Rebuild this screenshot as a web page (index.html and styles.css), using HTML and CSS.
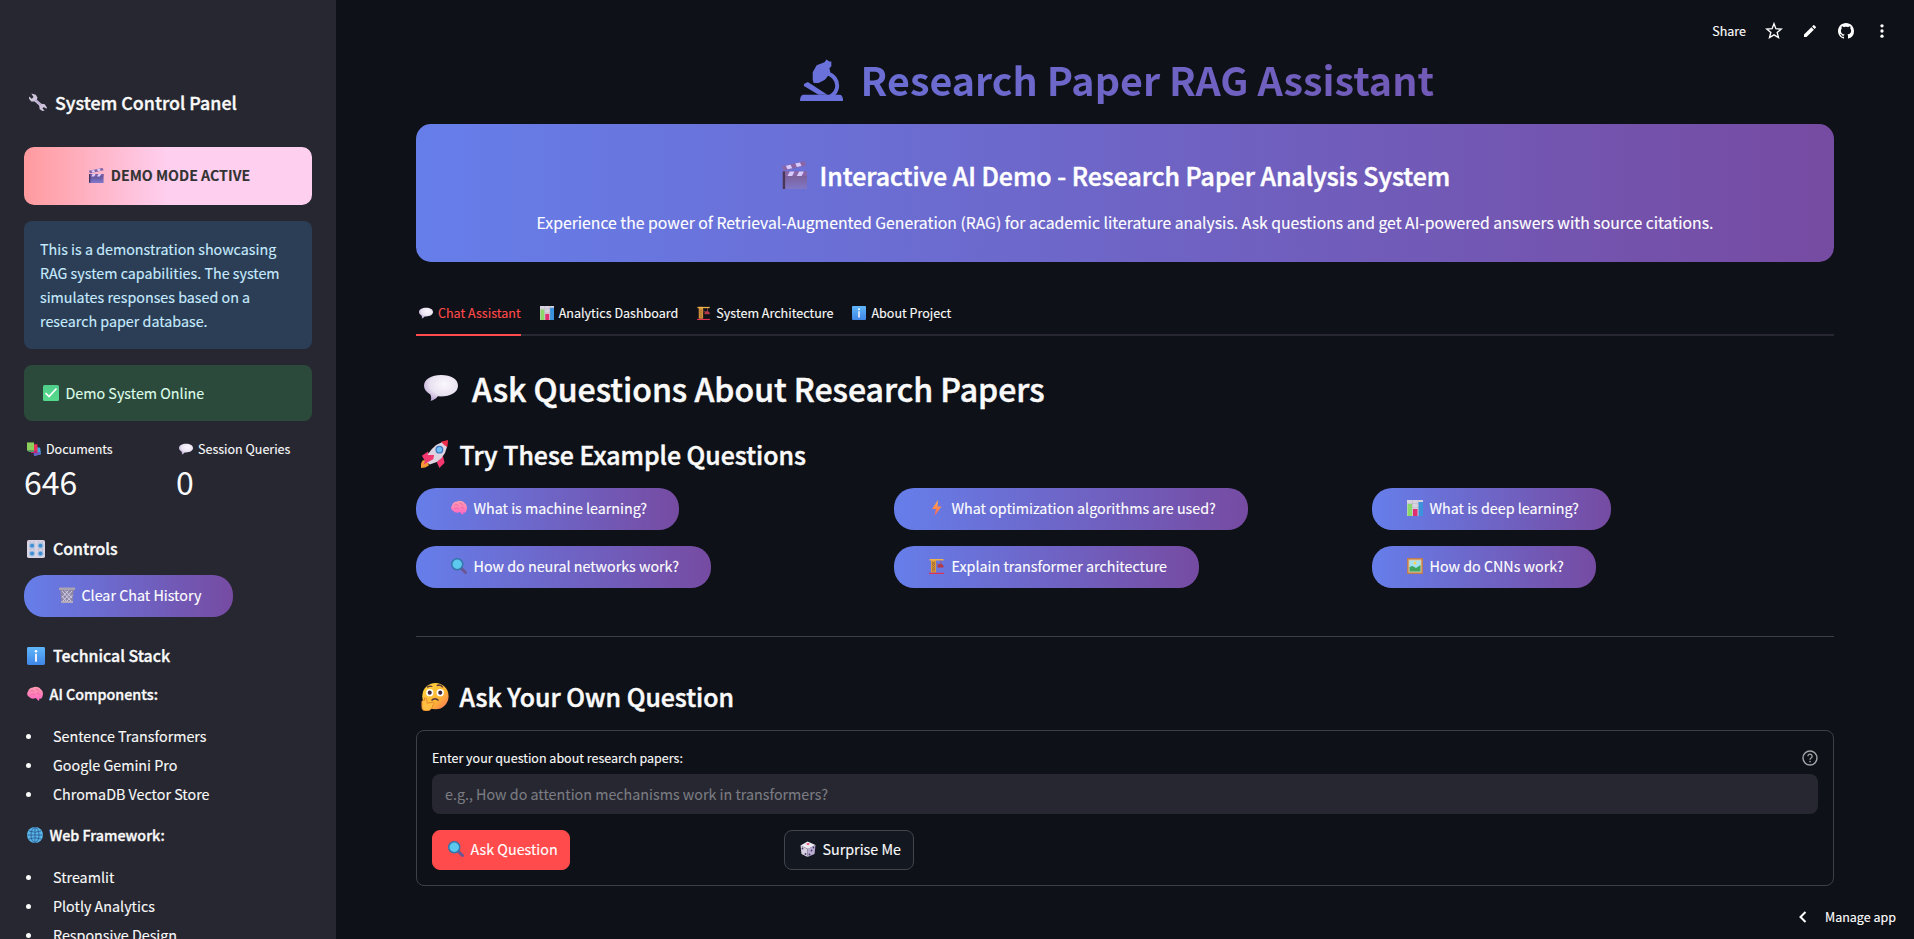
FILE: index.html
```
<!DOCTYPE html>
<html lang="en">
<head>
<meta charset="utf-8">
<title>Research Paper RAG Assistant</title>
<link rel="stylesheet" href="styles.css">
</head>
<body>
<svg class="defs" aria-hidden="true">
  <defs>
    <linearGradient id="g-clap" x1="0" y1="0" x2="0" y2="1"><stop offset="0" stop-color="#7a5a8e"/><stop offset="1" stop-color="#8077c6"/></linearGradient>
    <linearGradient id="g-clap2" x1="0" y1="0" x2="0" y2="1"><stop offset="0" stop-color="#594a86"/><stop offset="1" stop-color="#8178d0"/></linearGradient>
    <radialGradient id="g-talk" cx=".6" cy=".35" r=".7"><stop offset="0" stop-color="#fbf8fd"/><stop offset=".6" stop-color="#e9e2f1"/><stop offset="1" stop-color="#bba7d3"/></radialGradient>
    <linearGradient id="g-info" x1="0" y1="0" x2="0" y2="1"><stop offset="0" stop-color="#5fb6fb"/><stop offset="1" stop-color="#3f86e6"/></linearGradient>
    <linearGradient id="g-bolt" x1="0" y1="0" x2="0" y2="1"><stop offset="0" stop-color="#ffb54a"/><stop offset="1" stop-color="#ff5a55"/></linearGradient>
    <linearGradient id="g-face" x1="0" y1="0" x2="1" y2="1"><stop offset="0" stop-color="#ffd93f"/><stop offset=".6" stop-color="#ffb534"/><stop offset="1" stop-color="#f5705c"/></linearGradient>
    <linearGradient id="g-brain" x1="0" y1="0" x2="0" y2="1"><stop offset="0" stop-color="#ff9fb0"/><stop offset="1" stop-color="#ff63c3"/></linearGradient>
    <linearGradient id="g-check" x1="0" y1="0" x2="0" y2="1"><stop offset="0" stop-color="#4fce8a"/><stop offset="1" stop-color="#55d98b"/></linearGradient>
  </defs>
  <symbol id="scope" viewBox="0 0 44 44">
    <g fill="#6b71da"><path d="M27 1 30 3 32 3 32 8 30 10 31 14 27 20 25 22 19 25 14 25 13 22 13 14 17 7 25 4Z"/><path d="M4 26 8 24 28 37H19L4 28Z"/><path d="M3 37H41Q44 38 44 43.500H0Q0 38 3 37Z"/></g>
    <path d="M28 15Q38 19 38 28Q38 34 31 39" fill="none" stroke="#6b71da" stroke-width="4"/>
  </symbol>
  <symbol id="wrench" viewBox="0 0 32 32"><path d="M4 1 12 3 15 8 14 12 22 19 28 20 32 26 31 28 26 25 24 28 28 31 24 32 19 29 18 22 10 15 4 15 0 10 0 6 5 10 8 7Z" fill="#cfc6db"/><path d="m11 12 11 10" stroke="#b8a4d6" stroke-width="2"/></symbol>
  <symbol id="clapper" viewBox="0 0 32 32"><path d="M0 13H31V32H2L0 31Z" fill="url(#g-clap2)"/><path d="M0 13H3V32L0 31Z" fill="#43335f"/><path d="M0 6 29 0 31 5 2 11Z" fill="#7d5fa6"/><path d="m5 5.500 6-1.200 2 4-6 1.200Zm12-2.700 6-1.200 2 4-6 1.200Z" fill="#d9ccff"/><path d="M3 13H31V18H3Z" fill="#7d5fa6"/><path d="m8 13h6l-3 5H5Zm12 0h6l-3 5h-6Z" fill="#d9ccff"/></symbol>
  <symbol id="clapper-lg" viewBox="0 0 32 32" preserveAspectRatio="none"><path d="M1 12H32V32H1Z" fill="url(#g-clap)"/><path d="M1 12H4V32H1Z" fill="#4a3555"/><path d="M0 6 29 0 31 5 2 11Z" fill="#8a66a8"/><path d="m5 5.500 6-1.200 2 4-6 1.200Zm12-2.700 6-1.200 2 4-6 1.200Z" fill="#d6ccff"/><path d="M4 12H32V17H4Z" fill="#8a66a8"/><path d="m10 12h6l-3 5H7Zm12 0h6l-3 5h-6Z" fill="#d6ccff"/></symbol>
  <symbol id="check" viewBox="0 0 32 32"><rect width="32" height="32" rx="3" fill="url(#g-check)"/><path d="m6 17 6 6L26 8" fill="none" stroke="#fff" stroke-width="3.400" stroke-linecap="round"/></symbol>
  <symbol id="books" viewBox="0 0 32 32"><path d="M14 10 30 13 32 28 17 32Z" fill="#3fa9e6"/><path d="m15 25 15-2 1 5-15 4Z" fill="#6a5fc4"/><path d="M7 5H24V25H10Z" fill="#e8305a"/><path d="m8 22 15-2v5H10Z" fill="#b9267a"/><path d="M0 1H16V20H0Z" fill="#8ad05a"/><path d="M0 18H16V23H4Z" fill="#5b9a62"/></symbol>
  <symbol id="talk" viewBox="0 0 32 32"><path transform="translate(0 3) scale(1 .81)" d="M16 1C26 1 32 6 32 13.500S25 26 16 26l-3-.3C11 29 8 31 6 31c1-2 1-4 0-7.500C2 21 0 17.500 0 13.500 0 6 7 1 16 1Z" fill="url(#g-talk)"/></symbol>
  <symbol id="knobs" viewBox="0 0 32 32"><rect width="32" height="32" rx="3" fill="#d9d3e4"/><g fill="#3f8ed2" stroke="#a9c2e0" stroke-width="2"><circle cx="9" cy="10" r="4.500"/><circle cx="24" cy="10" r="4.500"/><circle cx="9" cy="24" r="4.500"/><circle cx="24" cy="24" r="4.500"/></g><path d="M5 3h1m6 0h1m7 0h1m6 0h1M5 17h1m6 0h1m7 0h1m6 0h1" stroke="#8d86a3" stroke-width="2"/></symbol>
  <symbol id="bin" viewBox="0 0 32 32"><path d="M2 3H30L27 32H5Z" fill="#8e86a6"/><path d="m6 8 18 20M12 7l14 15M6 18l9 11M26 8 8 28M19 7 6 21m21-5L15 29" stroke="#d5cee2" stroke-width="2"/><path d="M0 1H32V6H0Z" fill="#a9a3b2"/><path d="M4 28H28V32H5Z" fill="#b3acbf"/></symbol>
  <symbol id="info" viewBox="0 0 32 32"><rect width="32" height="32" rx="2.500" fill="url(#g-info)"/><circle cx="16" cy="7.500" r="2.300" fill="#fff"/><path d="M16 12v14" fill="none" stroke="#f4f0fb" stroke-width="3.600"/></symbol>
  <symbol id="brain" viewBox="0 0 32 32"><path d="M12 3C16 0 24 2 27 6C32 9 33 16 31 20C31 24 28 26 25 25L24 30 20 27 18 24C13 26 7 26 5 22C0 21-1 14 2 11C3 6 8 3 12 3Z" fill="url(#g-brain)"/><path d="M7 10q5-3 8 2m2-6q6 0 7 6m-17 6q4-4 9 0m3-3q5-2 7 3" fill="none" stroke="#e8609c" stroke-width="1.500"/></symbol>
  <symbol id="globe" viewBox="0 0 32 32"><circle cx="16" cy="16" r="16" fill="#58b6e8"/><g fill="none" stroke="#27508a" stroke-width="1.500"><path d="M16 1v30M1 16h30M4 8q12 5 24 0M4 24q12-5 24 0"/><ellipse cx="16" cy="16" rx="8" ry="15"/></g></symbol>
  <symbol id="chart" viewBox="0 0 32 32"><rect width="32" height="32" fill="#d8d3df"/><path d="M0 7h32M0 15h32M11 0v32M22 0v32" stroke="#b9b2c6"/><path d="M1 8H10V32H1Z" fill="#8bd76a"/><path d="M12 18H21V32H12Z" fill="#df2f70"/><path d="M23 4H32V32H23Z" fill="#3b93dc"/></symbol>
  <symbol id="crane" viewBox="0 0 32 32"><path d="M4 2H14V29H4Z" fill="#dc9a38"/><path d="m6 8 6 4-6 5 6 5-6 5M12 8 6 12l6 5-6 5 6 5" fill="none" stroke="#8a5a3a" stroke-width="1.200"/><path d="M1 2H29V5H1Z" fill="#eeb04a"/><path d="M24 5v9M14 11l9 4" stroke="#a9505c" stroke-width="1.500"/><path d="m17 15 6-4 6 4v4H17Z" fill="#b2384a"/><path d="M0 29.500H30V32H0Z" fill="#dd3155"/></symbol>
  <symbol id="rocket" viewBox="0 0 32 32"><path d="M8 13 1 18l3 5 6-4Zm10 12 3 7 6-6-2-8Z" fill="#f2386f"/><path d="M2 23Q-1 27 0 32q5 0 9-3l-2-6Z" fill="#f39a35"/><path d="M30 1Q17 2 8 16l-3 8 5 4 8-3Q31 16 30 1Z" fill="#ded3e0"/><path d="m7 17-4 11 11-6 1-5Z" fill="#f2386f"/><path d="M31 0 23 2q3 4 7 6Z" fill="#f02c48"/><circle cx="21" cy="11" r="4.500" fill="#3d79c4"/><circle cx="21" cy="11" r="3" fill="#70bdf0"/></symbol>
  <symbol id="lens" viewBox="0 0 32 32"><path d="m20 20 9 9" stroke="#6b5694" stroke-width="6" stroke-linecap="round"/><circle cx="12.500" cy="12.500" r="11" fill="#5cc8ee" stroke="#3475ad" stroke-width="3"/></symbol>
  <symbol id="bolt" viewBox="0 0 32 32"><path d="M18 0 6 18h8L11 32 25 13h-8Z" fill="url(#g-bolt)"/></symbol>
  <symbol id="frame" viewBox="0 0 32 32"><rect width="32" height="32" fill="#bd7d55"/><rect x="3" y="3" width="26" height="26" fill="#ecc48c"/><rect x="5" y="5" width="22" height="22" fill="#a5e1f5"/><circle cx="16" cy="10" r="3" fill="#ffd34e"/><path d="m5 18 6-2 7 4 9-6v13H5Z" fill="#3da65c"/></symbol>
  <symbol id="think" viewBox="0 0 32 32"><circle cx="16.500" cy="15" r="15" fill="url(#g-face)"/><circle cx="10" cy="11" r="4.200" fill="#fff"/><circle cx="22" cy="11" r="4.200" fill="#fff"/><circle cx="10" cy="11" r="2.300" fill="#42283a"/><circle cx="22" cy="11" r="2.300" fill="#42283a"/><path d="M7 5q3-2 6-1m5-1q4-2 7 2M12 20q4-4 8 0" fill="none" stroke="#553240" stroke-width="1.500"/><path d="M4 17q3-1 3 6l7-1q2 1 0 3-2 7-8 7-5 0-5-5V21q1-2 3-1Z" fill="#ffbd42" stroke="#e2802d"/></symbol>
  <symbol id="die" viewBox="0 0 32 32"><path d="m15 1 16 7-15 8L1 9Z" fill="#eee8f1"/><path d="m1 9 14 7v16L3 26Z" fill="#d7cfdf"/><path d="m31 8-16 8v16l14-6Z" fill="#b8add0"/><ellipse cx="16" cy="6" rx="3" ry="1.800" fill="#e45774"/><g fill="#493a6b"><circle cx="5" cy="15" r="1.800"/><circle cx="11" cy="26" r="1.800"/><circle cx="27" cy="13" r="1.800"/><circle cx="23" cy="19" r="1.800"/><circle cx="19" cy="27" r="1.800"/></g></symbol>
</svg>

<div class="app">
  <aside class="sidebar">
    <h3 class="side-title"><svg class="e e18"><use href="#wrench"/></svg>System Control Panel</h3>
    <div class="demo-badge"><svg class="e e15"><use href="#clapper"/></svg>DEMO MODE ACTIVE</div>
    <div class="alert info">This is a demonstration showcasing<br>RAG system capabilities. The system<br>simulates responses based on a<br>research paper database.</div>
    <div class="alert success"><svg class="e e16"><use href="#check"/></svg>Demo System Online</div>
    <div class="metrics">
      <div><div class="metric-label"><svg class="e e14"><use href="#books"/></svg>Documents</div><div class="metric-value">646</div></div>
      <div><div class="metric-label"><svg class="e e14"><use href="#talk"/></svg>Session Queries</div><div class="metric-value">0</div></div>
    </div>
    <h4 class="side-head"><svg class="e e18"><use href="#knobs"/></svg>Controls</h4>
    <button class="pill"><svg class="e e16"><use href="#bin"/></svg>Clear Chat History</button>
    <h4 class="side-head stack"><svg class="e e18"><use href="#info"/></svg>Technical Stack</h4>
    <p class="strong"><svg class="e e16"><use href="#brain"/></svg>AI Components:</p>
    <ul class="list"><li>Sentence Transformers</li><li>Google Gemini Pro</li><li>ChromaDB Vector Store</li></ul>
    <p class="strong"><svg class="e e16"><use href="#globe"/></svg>Web Framework:</p>
    <ul class="list"><li>Streamlit</li><li>Plotly Analytics</li><li>Responsive Design</li></ul>
  </aside>

  <main class="main">
    <h1 class="title"><svg class="scope"><use href="#scope"/></svg><span>Research Paper RAG Assistant</span></h1>
    <section class="banner">
      <h2><svg class="e e27"><use href="#clapper-lg"/></svg>Interactive AI Demo - Research Paper Analysis System</h2>
      <p>Experience the power of Retrieval-Augmented Generation (RAG) for academic literature analysis. Ask questions and get AI-powered answers with source citations.</p>
    </section>
    <nav class="tabs">
      <a class="tab active"><svg class="e e14"><use href="#talk"/></svg>Chat Assistant</a>
      <a class="tab"><svg class="e e14"><use href="#chart"/></svg>Analytics Dashboard</a>
      <a class="tab"><svg class="e e14"><use href="#crane"/></svg>System Architecture</a>
      <a class="tab"><svg class="e e14"><use href="#info"/></svg>About Project</a>
    </nav>
    <h2 class="h2"><svg class="e e34"><use href="#talk"/></svg>Ask Questions About Research Papers</h2>
    <h3 class="h3 try"><svg class="e e28"><use href="#rocket"/></svg>Try These Example Questions</h3>
    <div class="examples">
      <button class="pill"><svg class="e e16"><use href="#brain"/></svg>What is machine learning?</button>
      <button class="pill"><svg class="e e16"><use href="#bolt"/></svg>What optimization algorithms are used?</button>
      <button class="pill"><svg class="e e16"><use href="#chart"/></svg>What is deep learning?</button>
      <button class="pill"><svg class="e e16"><use href="#lens"/></svg>How do neural networks work?</button>
      <button class="pill"><svg class="e e16"><use href="#crane"/></svg>Explain transformer architecture</button>
      <button class="pill"><svg class="e e16"><use href="#frame"/></svg>How do CNNs work?</button>
    </div>
    <hr class="rule">
    <h3 class="h3 own"><svg class="e e28"><use href="#think"/></svg>Ask Your Own Question</h3>
    <form class="form">
      <div class="label-row"><label>Enter your question about research papers:</label>
        <svg class="help" viewBox="0 0 16 16"><circle cx="8" cy="8" r="7" fill="none" stroke="#a4a5a9" stroke-width="1.400"/><path d="M5.900 6.300a2.100 2.100 0 1 1 3.200 1.700Q8 8.600 8 9.700" fill="none" stroke="#a4a5a9" stroke-width="1.300"/><circle cx="8" cy="11.600" r=".8" fill="#a4a5a9"/></svg></div>
      <input class="input" type="text" placeholder="e.g., How do attention mechanisms work in transformers?">
      <div class="actions">
        <button type="button" class="btn primary"><svg class="e e16"><use href="#lens"/></svg>Ask Question</button>
        <button type="button" class="btn"><svg class="e e16"><use href="#die"/></svg>Surprise Me</button>
      </div>
    </form>
  </main>
</div>

<div class="toolbar">
  <span>Share</span>
  <svg viewBox="0 0 24 24"><path d="m12 3.200 2.300 6 6.400.5-4.900 4.100 1.600 6.200-5.400-3.400-5.400 3.400 1.600-6.200-4.900-4.100 6.400-.5Z" fill="none" stroke="#fff" stroke-width="1.600"/></svg>
  <svg class="pen" viewBox="0 0 24 24"><path d="M3 17.250V21h3.750L17.800 9.940l-3.750-3.750ZM20.700 7.040a1 1 0 0 0 0-1.410l-2.340-2.340a1 1 0 0 0-1.410 0l-1.830 1.830 3.750 3.750Z" fill="#fff"/></svg>
  <svg class="gh" viewBox="0 0 16 16"><path d="M8 0C3.580 0 0 3.580 0 8c0 3.540 2.290 6.530 5.470 7.590.4.070.55-.17.55-.38 0-.19-.01-.82-.01-1.490-2.010.37-2.530-.49-2.690-.94-.09-.23-.48-.94-.82-1.130-.28-.15-.68-.52-.01-.53.63-.01 1.080.58 1.230.82.72 1.210 1.870.87 2.330.66.07-.52.28-.87.51-1.070-1.780-.2-3.640-.89-3.640-3.950 0-.87.310-1.590.82-2.150-.08-.2-.36-1.020.08-2.120 0 0 .67-.21 2.200.82.64-.18 1.320-.27 2-.27s1.360.09 2 .27c1.530-1.040 2.200-.82 2.200-.82.44 1.100.16 1.920.08 2.120.51.56.82 1.270.82 2.150 0 3.070-1.870 3.750-3.650 3.950.29.25.54.73.54 1.480 0 1.070-.01 1.930-.01 2.200 0 .21.15.46.55.38A8.010 8.010 0 0 0 16 8c0-4.420-3.580-8-8-8Z" fill="#fff"/></svg>
  <svg viewBox="0 0 24 24"><g fill="#fff"><circle cx="12" cy="5.800" r="2"/><circle cx="12" cy="12" r="2"/><circle cx="12" cy="18.200" r="2"/></g></svg>
</div>
<div class="manage"><svg viewBox="0 0 8 12"><path d="M6.500 1 1.500 6l5 5" fill="none" stroke="#fff" stroke-width="2"/></svg><span>Manage app</span></div>
</body>
</html>
```
FILE: styles.css
```
* { box-sizing: border-box; }
body {
  margin: 0;
  height: 939px;
  overflow: hidden;
  background: #0e1117;
  color: #fafafa;
  font: 400 14.3px/24px "Noto Sans CJK JP", "Noto Sans", sans-serif;
  -webkit-text-stroke: 0.12px currentColor;
}
h1, h2, h3, h4, p, ul { margin: 0; padding: 0; }
button, input { font: inherit; color: inherit; border: 0; }
.defs { position: absolute; width: 0; height: 0; }
.app { display: flex; height: 939px; }

/* inline pictograms, sized per text size */
.e { flex: none; margin-left: 3px; overflow: visible; }
.e14 { width: 14px; height: 14px; margin-right: 5px; }
.e15 { width: 15px; height: 15px; margin-right: 7px; }
.e16 { width: 16px; height: 16px; margin-right: 6.500px; }
.e18 { width: 18px; height: 18px; margin-right: 8px; }
.e27 { width: 25px; height: 28px; margin-right: 12.500px; }
.e28 { width: 28px; height: 28px; margin-left: 5px; margin-right: 10.500px; }
.e34 { width: 34px; height: 34px; margin-left: 8px; margin-right: 14px; }

/* sidebar */
.sidebar {
  flex: none;
  width: 336px;
  height: 939px;
  padding: 90px 24px 0;
  background: #262730;
  overflow: hidden;
  display: flex;
  flex-direction: column;
}
.sidebar > * { flex: none; }
.side-title, .side-head, .strong {
  display: flex;
  align-items: center;
  height: 24px;
  font-weight: 500;
  -webkit-text-stroke: 0.35px currentColor;
}
.side-title { font-size: 17.82px; margin-bottom: 33px; }
.side-title .e { margin-left: 5px; }
.side-head { font-size: 15.88px; margin: 31px 0 14px; }
.side-head.stack { margin: 27px 0 0; }
.demo-badge {
  height: 58px;
  padding-bottom: 2px;
  border-radius: 10px;
  background: linear-gradient(90deg, #ff9a9e 0%, #fecfef 50%, #fecfef 100%);
  color: #333;
  font-weight: 700;
  font-size: 14.21px;
  display: flex;
  align-items: center;
  justify-content: center;
}
.alert { margin-top: 16px; padding: 16px; border-radius: 8px; }
.info { background: #2b3e56; color: #c7ebff; }
.success { height: 56px; background: #2b4a3c; color: #dffde9; display: flex; align-items: center; }
.metrics { display: grid; grid-template-columns: 1fr 1fr; gap: 16px; margin-top: 16px; }
.metric-label { display: flex; align-items: center; height: 24px; font-size: 12.500px; white-space: nowrap; }
.metric-value { height: 45px; font-size: 32px; line-height: 41px; -webkit-text-stroke: 0; }
.strong { margin-top: 14px; font-size: 14.31px; }
.list { margin-top: 15px; list-style: none; }
.list li { display: flex; align-items: center; height: 29px; }
.list li::before { content: ""; width: 5px; height: 5px; margin: 2px 22px 0 2px; border-radius: 50%; background: #fafafa; }
.list + .strong { margin-top: 15px; }

.pill {
  display: flex;
  align-items: center;
  align-self: flex-start;
  justify-self: start;
  height: 42px;
  padding: 0 32px 2px;
  border-radius: 20px;
  background: linear-gradient(90deg, #667eea 0%, #764ba2 100%);
  color: #fff;
  white-space: nowrap;
}

/* main column */
.main { flex: 1; min-width: 0; padding: 51px 80px 0; }
.title {
  display: flex;
  align-items: center;
  height: 56px;
  padding-left: 384px;
  font-size: 39.42px;
  font-weight: 700;
  line-height: 56px;
  white-space: nowrap;
  -webkit-text-stroke: 0;
}
.scope { width: 44px; height: 44px; margin: 2px 17.500px 0 0; }
.title span {
  margin-left: -445.500px;
  padding-left: 445.500px;
  padding-right: 400px;
  background: linear-gradient(90deg, #667eea 0%, #764ba2 100%);
  -webkit-background-clip: text;
  background-clip: text;
  color: transparent;
}
.banner {
  height: 138px;
  margin-top: 17px;
  padding-top: 35px;
  border-radius: 15px;
  background: linear-gradient(90deg, #667eea 0%, #764ba2 100%);
  color: #fff;
  text-align: center;
}
.banner h2 {
  display: flex;
  align-items: center;
  height: 32px;
  padding-left: 363px;
  font-size: 24.88px;
  font-weight: 500;
  white-space: nowrap;
  -webkit-text-stroke: 0.5px currentColor;
}
.banner p { margin-top: 18px; height: 28px; font-size: 15.75px; line-height: 28px; white-space: nowrap; }
.tabs { display: flex; gap: 16px; height: 42px; margin-top: 32px; box-shadow: inset 0 -2px #262730; font-size: 12.550px; }
.tab { display: flex; align-items: center; height: 42px; padding-bottom: 4px; }
.tab.active { color: #ff4b4b; box-shadow: inset 0 -2px #ff4b4b; }
.h2, .h3 { display: flex; align-items: center; font-weight: 500; white-space: nowrap; -webkit-text-stroke: 0.5px currentColor; }
.h2 { height: 44px; margin-top: 30px; font-size: 32px; }
.h3 { height: 32px; font-size: 24.850px; }
.try { margin-top: 28px; }
.own { margin-top: 43px; }
.own .e { margin-top: 2px; }
.examples { display: grid; grid-template-columns: repeat(3, 1fr); gap: 16px; margin-top: 18px; }
.rule { height: 1px; margin: 48px 0 0; border: 0; background: #3d4045; }
.form { height: 156px; margin-top: 18px; padding: 15px; border: 1px solid #3d4045; border-radius: 8px; }
.label-row { display: flex; align-items: center; justify-content: space-between; height: 24px; margin-bottom: 4px; font-size: 12.500px; }
.help { width: 16px; height: 16px; }
.input { display: block; width: 100%; height: 40px; padding: 0 13px 2px; border-radius: 8px; background: #262730; outline: 0; }
.input::placeholder { color: #7b7c82; opacity: 1; }
.actions { display: grid; grid-template-columns: 336px 336px; gap: 16px; margin-top: 16px; }
.btn {
  display: flex;
  align-items: center;
  justify-self: start;
  height: 40px;
  padding: 0 12px 2px;
  border: 1px solid #42454c;
  border-radius: 8px;
  background: #131720;
  white-space: nowrap;
}
.primary { padding-right: 11px; background: #ff4b4b; border-color: #ff4b4b; color: #fff; }

/* overlays */
.toolbar { position: absolute; top: 15px; right: 22px; display: flex; align-items: center; height: 32px; gap: 16px; font-size: 12.500px; color: #fff; }
.toolbar span { margin-right: 2px; }
.toolbar svg { width: 20px; height: 20px; }
.toolbar .pen, .toolbar .gh { width: 16px; height: 16px; margin: 0 2px; }
.manage { position: absolute; right: 18px; bottom: 10px; display: flex; align-items: center; gap: 18px; font-size: 12.500px; color: #fff; }
.manage svg { width: 8px; height: 12px; }
```
